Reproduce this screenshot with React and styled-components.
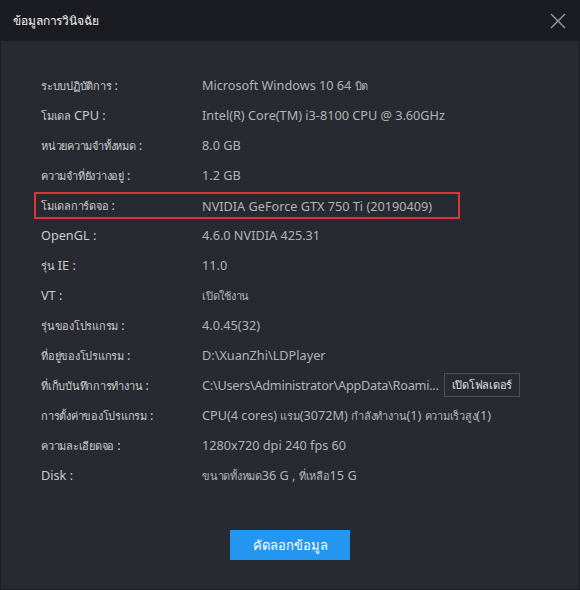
import React from "react";
import styled, { createGlobalStyle } from "styled-components";

const GlobalStyle = createGlobalStyle`
  html, body {
    margin: 0;
    padding: 0;
    background: #1b1c21;
  }
  * {
    box-sizing: border-box;
  }
`;

const Dialog = styled.div`
  width: 580px;
  height: 590px;
  display: flex;
  flex-direction: column;
  background: #272a31;
  border: 1px solid #1b1c21;
  border-top: none;
  font-family: "Noto Sans", "Liberation Sans", sans-serif;
  font-size: 12.7px;
`;

const Header = styled.div`
  height: 41px;
  flex: none;
  display: flex;
  align-items: center;
  justify-content: space-between;
  padding: 0 12px 0 12px;
  background: #1b1c21;
  color: #f2f2f2;
  font-size: 12px;
  letter-spacing: -0.1px;
`;

const Close = styled.button`
  width: 18px;
  height: 18px;
  padding: 0;
  border: none;
  background: transparent;
  display: flex;
  align-items: center;
  justify-content: center;
  cursor: pointer;
`;

const Body = styled.div`
  flex: 1;
  display: flex;
  flex-direction: column;
  padding: 29px 0 0 40px;
`;

const List = styled.div`
  display: flex;
  flex-direction: column;
`;

const Row = styled.div`
  display: grid;
  grid-template-columns: 161px 1fr;
  align-items: center;
  height: 30px;
  ${(p) =>
    p.$marked &&
    `
    height: 27px;
    margin: 2px 0 1px -7px;
    width: 426px;
    padding-left: 5px;
    border: 2px solid #d6363c;
  `}
`;

const Label = styled.div`
  color: #cbcbcb;
  white-space: nowrap;
`;

const Value = styled.div`
  color: #b4b4b6;
  white-space: nowrap;
  display: flex;
  align-items: center;
  gap: 5px;
`;

const Path = styled.span`
  letter-spacing: -0.25px;
`;

const Thai = styled.span`
  font-size: 11px;
  letter-spacing: -0.25px;
`;

const FolderButton = styled.button`
  height: 24px;
  padding: 0 7px;
  background: transparent;
  border: 1px solid #4b4e56;
  color: #e0e0e0;
  font-family: inherit;
  font-size: 11px;
  letter-spacing: -0.25px;
  cursor: pointer;
`;

const Footer = styled.div`
  display: flex;
  justify-content: center;
  padding-top: 40px;
  margin-left: -40px;
`;

const CopyButton = styled.button`
  width: 120px;
  height: 30px;
  border: none;
  background: #2496f0;
  color: #ffffff;
  font-family: inherit;
  font-size: 13px;
  cursor: pointer;
`;

// wrap Thai runs so they get the smaller size the original renders them at
const mixed = (text) =>
  text.split(/([\u0E00-\u0E7F]+)/).map((part, i) =>
    /[\u0E00-\u0E7F]/.test(part) ? <Thai key={i}>{part}</Thai> : part
  );

const rows = [
  { label: "ระบบปฏิบัติการ :", value: "Microsoft Windows 10 64 บิต" },
  { label: "โมเดล CPU :", value: "Intel(R) Core(TM) i3-8100 CPU @ 3.60GHz" },
  { label: "หน่วยความจำทั้งหมด :", value: "8.0 GB" },
  { label: "ความจำที่ยังว่างอยู่ :", value: "1.2 GB" },
  { label: "โมเดลการ์ดจอ :", value: "NVIDIA GeForce GTX 750 Ti (20190409)", marked: true },
  { label: "OpenGL :", value: "4.6.0 NVIDIA 425.31" },
  { label: "รุ่น IE :", value: "11.0" },
  { label: "VT :", value: "เปิดใช้งาน" },
  { label: "รุ่นของโปรแกรม :", value: "4.0.45(32)" },
  { label: "ที่อยู่ของโปรแกรม :", value: "D:\\XuanZhi\\LDPlayer" },
  {
    label: "ที่เก็บบันทึกการทำงาน :",
    value: "C:\\Users\\Administrator\\AppData\\Roami...",
    folder: true,
  },
  {
    label: "การตั้งค่าของโปรแกรม :",
    value: "CPU(4 cores) แรม(3072M) กำลังทำงาน(1) ความเร็วสูง(1)",
  },
  { label: "ความละเอียดจอ :", value: "1280x720 dpi 240 fps 60" },
  { label: "Disk :", value: "ขนาดทั้งหมด36 G , ที่เหลือ15 G" },
];

const App = () => {
  return (
    <>
      <GlobalStyle />
      <Dialog>
        <Header>
          <span>ข้อมูลการวินิจฉัย</span>
          <Close aria-label="close">
            <svg width="16" height="16" viewBox="0 0 16 16">
              <path d="M1 1L15 15M15 1L1 15" stroke="#9a9ca2" strokeWidth="1.4" />
            </svg>
          </Close>
        </Header>
        <Body>
          <List>
            {rows.map((r) => (
              <Row key={r.label} $marked={r.marked}>
                <Label>{mixed(r.label)}</Label>
                <Value>
                  {r.folder ? <Path>{r.value}</Path> : <span>{mixed(r.value)}</span>}
                  {r.folder && <FolderButton>เปิดโฟลเดอร์</FolderButton>}
                </Value>
              </Row>
            ))}
          </List>
          <Footer>
            <CopyButton>คัดลอกข้อมูล</CopyButton>
          </Footer>
        </Body>
      </Dialog>
    </>
  );
};

export default App;
